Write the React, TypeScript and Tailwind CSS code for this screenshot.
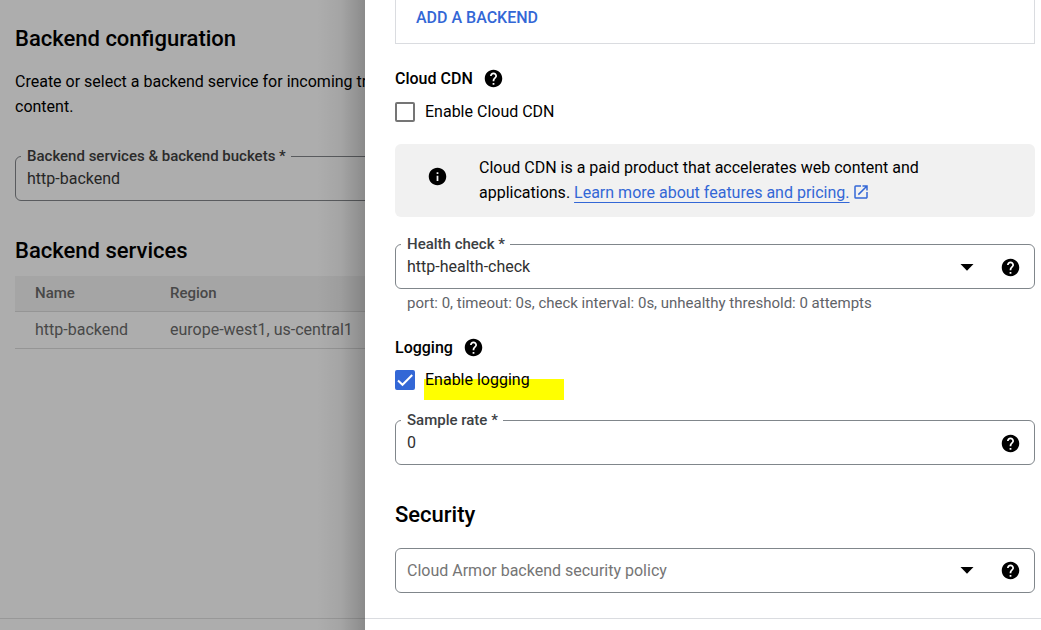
import { useId, useState } from "react";
import type { ReactNode } from "react";
import { MdHelp, MdInfo, MdOpenInNew } from "react-icons/md";

function HelpButton({ topic }: { topic: string }) {
  return (
    <button type="button" aria-label={`Help: ${topic}`} className="block shrink-0 text-black">
      <MdHelp size={21} />
    </button>
  );
}

function Field({
  id,
  label,
  muted = false,
  children,
}: {
  id: string;
  label: string;
  muted?: boolean;
  children: ReactNode;
}) {
  return (
    <fieldset
      className={`flex h-[53px] min-w-0 rounded-md border px-[5px] ${
        muted ? "border-[#595b5e]" : "border-[#80868b]"
      }`}
    >
      <legend className={`pr-[5px] pl-1.5 text-[15px] leading-4 font-medium ${muted ? "text-[#2b2b2b]" : "text-[#3c4043]"}`}>
        <label htmlFor={id}>{label}</label>
      </legend>
      <div className="flex h-[30px] min-w-0 flex-1 items-center pr-2 pl-1.5">{children}</div>
    </fieldset>
  );
}

function Caret() {
  return (
    <svg viewBox="0 0 14 7" aria-hidden="true" className="pointer-events-none absolute right-0 h-[7px] w-3.5 fill-black">
      <path d="M.5 0h13L7 6.8z" />
    </svg>
  );
}

function Checkbox({
  label,
  initial,
  highlighted = false,
}: {
  label: string;
  initial: boolean;
  highlighted?: boolean;
}) {
  const [checked, setChecked] = useState(initial);
  return (
    <label className="relative flex w-fit items-center gap-2.5 leading-6">
      {highlighted && <span className="absolute top-[11px] left-[29px] h-[21px] w-[140px] bg-[#ffff00]" />}
      <span className="relative grid size-5 place-items-center">
        <input
          type="checkbox"
          checked={checked}
          onChange={(e) => setChecked(e.target.checked)}
          className="col-start-1 row-start-1 size-5 appearance-none rounded-xs border-2 border-[#757575] checked:border-[#3367d6] checked:bg-[#3367d6]"
        />
        {checked && (
          <svg
            viewBox="0 0 20 20"
            aria-hidden="true"
            className="pointer-events-none col-start-1 row-start-1 size-5 fill-none stroke-white stroke-2"
          >
            <path d="M3 10.5l4.5 4.3L17.2 5" />
          </svg>
        )}
      </span>
      <span className="relative">{label}</span>
    </label>
  );
}

const services = [{ name: "http-backend", region: "europe-west1, us-central1" }];

function BackendConfiguration() {
  const id = useId();
  return (
    <section className="relative flex w-[365px] shrink-0 flex-col overflow-hidden bg-[#adadad]">
      <div className="w-[420px] flex-1 pt-[25px] pl-[15px]">
        <h2 className="text-[22px] leading-7 font-medium">Backend configuration</h2>
        <p className="mt-4 leading-[25px]">
          <span className="whitespace-nowrap">Create or select a backend service for incoming traffic.</span>
          <br />
          content.
        </p>
        <div className="mt-[29px]">
          <Field id={id} label="Backend services & backend buckets *" muted>
            <input id={id} defaultValue="http-backend" className="min-w-0 flex-1 bg-transparent text-[#262626] outline-none" />
          </Field>
        </div>
        <h2 className="mt-9 text-[22px] leading-7 font-medium">Backend services</h2>
        <table className="mt-[11px] w-full text-left text-[#484848]">
          <thead>
            <tr className="h-[35px] border-b border-[#959595] bg-[#a5a5a5] text-[15px]">
              <th className="w-[135px] pl-5 font-medium">Name</th>
              <th className="pl-5 font-medium">Region</th>
            </tr>
          </thead>
          <tbody>
            {services.map((s) => (
              <tr key={s.name} className="h-[37px] border-b border-[#959595]">
                <td className="pl-5">{s.name}</td>
                <td className="pl-5">{s.region}</td>
              </tr>
            ))}
          </tbody>
        </table>
      </div>
      <footer className="h-3 border-t border-[#989898]" />
      <div className="pointer-events-none absolute inset-y-0 right-0 w-12 bg-linear-to-r from-transparent via-black/5 to-black/20" />
    </section>
  );
}

function SettingHeading({ children }: { children: string }) {
  return (
    <div className="flex h-6 items-center gap-2.5">
      <h3 className="pt-0.5 font-medium">{children}</h3>
      <HelpButton topic={children} />
    </div>
  );
}

function BackendDrawer() {
  const id = useId();
  const health = `${id}-health`;
  const rate = `${id}-rate`;
  return (
    <main className="flex min-w-0 flex-1 flex-col bg-white">
      <div className="flex-1 pr-1.5 pl-[30px]">
        <div className="flex h-11 border border-t-0 border-[#dadce0] pt-1.5 pl-5">
          <button type="button" className="h-6 font-medium text-[#3367d6]">
            ADD A BACKEND
          </button>
        </div>

        <div className="mt-[22px]">
          <SettingHeading>Cloud CDN</SettingHeading>
        </div>
        <div className="mt-2.5">
          <Checkbox label="Enable Cloud CDN" initial={false} />
        </div>

        <div className="mt-5 flex rounded-md bg-[#f1f1f1] pt-[11px] pr-12 pb-3 pl-8">
          <MdInfo size={21} className="mt-[11px] mr-[31px] shrink-0" />
          <p className="max-w-[460px] leading-[25px]">
            Cloud CDN is a paid product that accelerates web content and applications.{" "}
            <a
              href="#pricing"
              className="whitespace-nowrap text-[#3367d6] underline decoration-1 underline-offset-4 [text-decoration-skip-ink:none]"
            >
              Learn more about features and pricing.
              <MdOpenInNew size={18} className="-mt-1 ml-0.5 inline" />
            </a>
          </p>
        </div>

        <div className="mt-[19px]">
          <Field id={health} label="Health check *">
            <div className="relative mr-[26px] flex min-w-0 flex-1 items-center">
              <select id={health} className="w-full appearance-none bg-transparent text-[#303030] outline-none">
                <option>http-health-check</option>
              </select>
              <Caret />
            </div>
            <HelpButton topic="Health check" />
          </Field>
        </div>
        <p className="mt-1 pl-3 text-[15px] leading-5 text-[#5f6368]">
          port: 0, timeout: 0s, check interval: 0s, unhealthy threshold: 0 attempts
        </p>

        <div className="mt-[22px]">
          <SettingHeading>Logging</SettingHeading>
        </div>
        <div className="mt-[9px]">
          <Checkbox label="Enable logging" initial highlighted />
        </div>

        <div className="mt-5">
          <Field id={rate} label="Sample rate *">
            <input id={rate} defaultValue="0" className="min-w-0 flex-1 bg-transparent text-[#303030] outline-none" />
            <HelpButton topic="Sample rate" />
          </Field>
        </div>

        <h2 className="mt-9 text-[22px] leading-7 font-medium">Security</h2>
        <div className="mt-[19px] flex h-[45px] items-center rounded-md border border-[#80868b] pr-[13px] pl-[11px]">
          <div className="relative mr-[26px] flex min-w-0 flex-1 items-center">
            <select
              aria-label="Cloud Armor backend security policy"
              className="w-full appearance-none bg-transparent text-[#757575] outline-none"
            >
              <option>Cloud Armor backend security policy</option>
            </select>
            <Caret />
          </div>
          <HelpButton topic="Security policy" />
        </div>
      </div>
      <footer className="h-3 border-t border-[#dadce0]" />
    </main>
  );
}

export default function App() {
  return (
    <div className="flex min-h-screen font-[Roboto,sans-serif] text-base text-black">
      <BackendConfiguration />
      <BackendDrawer />
    </div>
  );
}
